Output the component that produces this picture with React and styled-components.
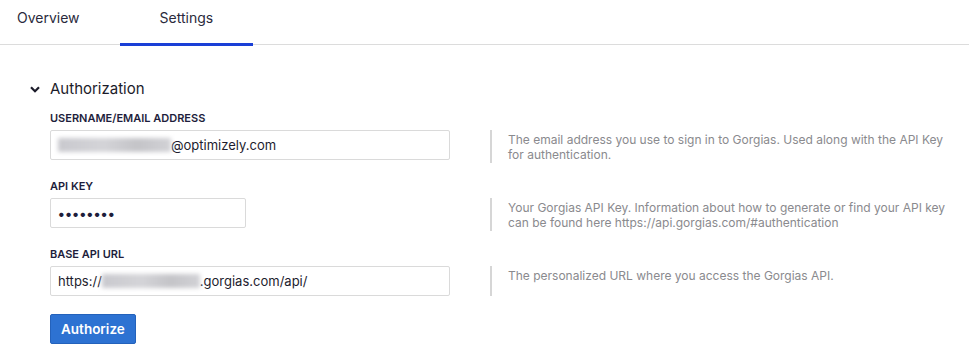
import React from "react";
import styled, { createGlobalStyle } from "styled-components";

const GlobalStyle = createGlobalStyle`
  body {
    margin: 0;
    background: #ffffff;
    font-family: Inter, "Noto Sans", sans-serif;
    color: #1f1f33;
  }
`;

const Page = styled.div`
  width: 969px;
`;

const TabBar = styled.div`
  display: flex;
  height: 44px;
  border-bottom: 1px solid #dcdcdc;
`;

const Tab = styled.div`
  margin-bottom: -2px;
  padding: 9px 40px 0 ${(p) => (p.$first ? "17px" : "40px")};
  box-sizing: border-box;
  height: 46px;
  font-size: 14px;
  line-height: 18px;
  color: #2a2a3c;
  border-bottom: 3px solid ${(p) => (p.$active ? "#1a3fd6" : "transparent")};
  cursor: pointer;
`;

const Content = styled.div`
  padding: 34px 15px 0 30px;
`;

const SectionHeader = styled.div`
  display: flex;
  align-items: center;
  gap: 10px;
  height: 20px;
  font-size: 15px;
  line-height: 20px;
  color: #1c1c2a;
  margin-bottom: 12px;
`;

const Body = styled.div`
  padding-left: 20px;
`;

const Field = styled.div`
  margin-bottom: ${(p) => p.$mb || 16}px;
`;

const Label = styled.div`
  font-size: 11px;
  line-height: 14px;
  font-weight: 600;
  color: #1e1e3c;
  text-transform: uppercase;
  margin-bottom: 5px;
`;

const Row = styled.div`
  display: flex;
  gap: 40px;
`;

const InputCol = styled.div`
  width: 400px;
  flex: none;
`;

const InputBox = styled.div`
  width: ${(p) => p.$width || 400}px;
  height: 30px;
  box-sizing: border-box;
  border: 1px solid #dadada;
  border-radius: 2px;
  padding: 0 7px;
  display: flex;
  align-items: center;
  font-size: 13px;
  color: #1d1d2e;
  white-space: nowrap;
`;

const Blur = styled.span`
  display: inline-block;
  width: ${(p) => p.$w}px;
  height: 14px;
  background: linear-gradient(90deg, #c9c9ce, #d4d4d8 40%, #c4c4c8 70%, #d2d2d6);
  filter: blur(2px);
`;

const Dots = styled.span`
  font-size: 14px;
  letter-spacing: 0.5px;
  color: #1e1e3c;
  font-weight: 700;
`;

const Description = styled.div`
  flex: 1;
  border-left: 2px solid #d6d6d6;
  padding: 2px 0 1px 16px;
  font-size: 12px;
  line-height: 15px;
  color: #8a8a8e;
  max-width: 446px;
`;

const Button = styled.button`
  height: 30px;
  padding: 0 10px;
  background: #2d72d2;
  border: 1px solid #2462bb;
  border-radius: 2px;
  color: #ffffff;
  font-family: Inter, "Noto Sans", sans-serif;
  font-size: 13.5px;
  font-weight: 600;
  cursor: pointer;
`;

const Chevron = () => (
  <svg width="10" height="7" viewBox="0 0 10 7" fill="none">
    <path d="M1 1.2L5 5.2L9 1.2" stroke="#1c1c2a" strokeWidth="2.2" />
  </svg>
);

const fields = [
  {
    label: "Username/Email address",
    value: (
      <>
        <Blur $w={113} />
        @optimizely.com
      </>
    ),
    desc: "The email address you use to sign in to Gorgias. Used along with the API Key for authentication.",
  },
  {
    label: "API Key",
    width: 196,
    value: <Dots>••••••••</Dots>,
    desc: "Your Gorgias API Key. Information about how to generate or find your API key can be found here https://api.gorgias.com/#authentication",
  },
  {
    label: "Base API URL",
    value: (
      <>
        https://
        <Blur $w={98} />
        .gorgias.com/api/
      </>
    ),
    desc: "The personalized URL where you access the Gorgias API.",
    mb: 18,
  },
];

export default function App() {
  return (
    <Page>
      <GlobalStyle />
      <TabBar>
        <Tab $first>Overview</Tab>
        <Tab $active>Settings</Tab>
      </TabBar>
      <Content>
        <SectionHeader>
          <Chevron />
          Authorization
        </SectionHeader>
        <Body>
          {fields.map((f) => (
            <Field key={f.label} $mb={f.mb}>
              <Label>{f.label}</Label>
              <Row>
                <InputCol>
                  <InputBox $width={f.width}>{f.value}</InputBox>
                </InputCol>
                <Description>{f.desc}</Description>
              </Row>
            </Field>
          ))}
          <Button>Authorize</Button>
        </Body>
      </Content>
    </Page>
  );
}
